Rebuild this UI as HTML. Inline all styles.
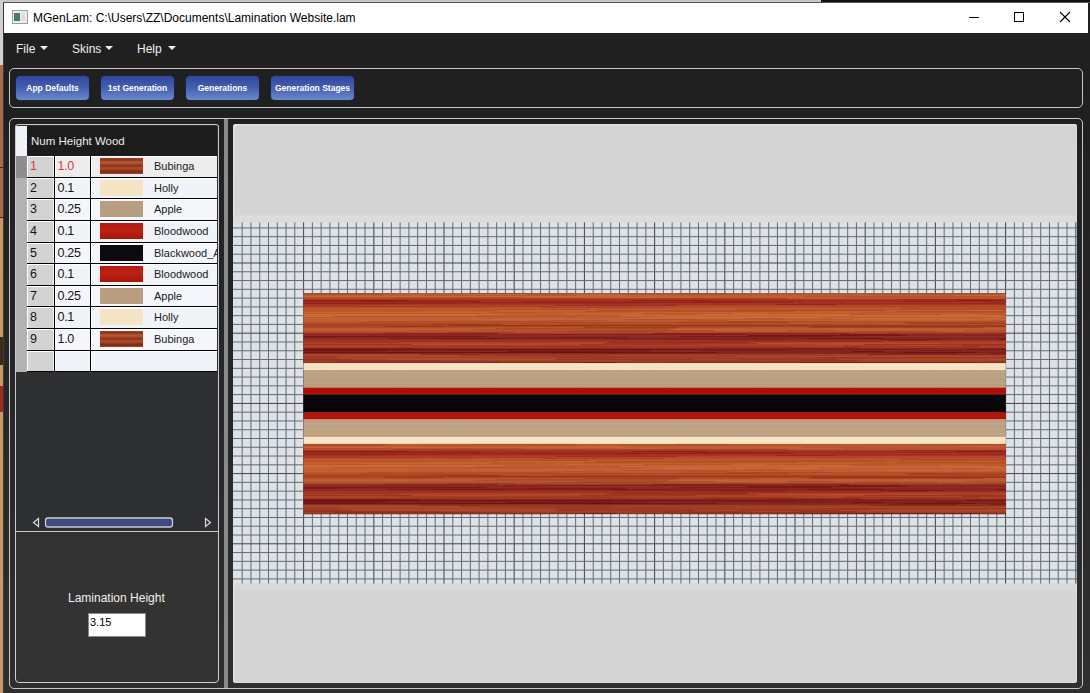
<!DOCTYPE html>
<html><head><meta charset="utf-8">
<style>
html,body{margin:0;padding:0;}
body{width:1090px;height:693px;overflow:hidden;position:relative;background:#222;font-family:"Liberation Sans",sans-serif;}
.a{position:absolute;}
.tx{font-size:12.5px;line-height:15px;white-space:nowrap;letter-spacing:-0.3px}
.tw{font-size:11px;line-height:13px;white-space:nowrap;color:#1a1a1a;overflow:hidden;width:63px}
.btn{position:absolute;top:76px;height:24px;border-radius:4px;background:linear-gradient(180deg,#32449c 0%,#4560b0 50%,#6b8acc 100%);box-shadow:0 0 0 1px #1a2440;color:#fff;font-weight:bold;font-size:8.5px;line-height:24px;text-align:center;white-space:nowrap}
.menu{position:absolute;top:42px;color:#f0f0f0;font-size:12px;line-height:15px}
.tri{position:absolute;width:0;height:0;border-left:4px solid transparent;border-right:4px solid transparent;border-top:4px solid #f0f0f0}
</style></head><body>
<!-- background bits -->
<div class="a" style="left:0;top:0;width:821px;height:2px;background:#c8c8c8"></div>
<div class="a" style="left:821px;top:0;width:269px;height:2px;background:#121212"></div>
<div class="a" style="left:0;top:0;width:3px;height:65px;background:#d0d0d0"></div>
<div class="a" style="left:0;top:65px;width:3px;height:103px;background:#a86a48"></div>
<div class="a" style="left:0;top:167px;width:3px;height:1px;background:#3a2418"></div>
<div class="a" style="left:0;top:168px;width:3px;height:50px;background:#a86a48"></div>
<div class="a" style="left:0;top:217px;width:3px;height:1px;background:#3a2418"></div>
<div class="a" style="left:0;top:218px;width:3px;height:475px;background:#c89a62"></div>
<div class="a" style="left:0;top:337px;width:3px;height:28px;background:#3a2a1a"></div>
<div class="a" style="left:0;top:386px;width:3px;height:26px;background:#a02a22"></div>
<!-- window -->
<div class="a" style="left:3px;top:2px;width:1087px;height:691px;background:linear-gradient(180deg,#202020 0px,#202020 110px,#2f2f2f 691px);border-left:1px solid #3a3a3a;border-top:1px solid #555;box-sizing:border-box"></div>
<div class="a" style="left:4px;top:3px;width:1084px;height:30px;background:#fff"></div>
<!-- icon -->
<div class="a" style="left:12px;top:10px;width:14px;height:12px;border:1px solid #9aa0a0;background:#e8ecec"></div>
<div class="a" style="left:14px;top:13px;width:6px;height:8px;background:#4a7a68"></div>
<div class="a" style="left:21px;top:13px;width:4px;height:8px;background:#ddd"></div>
<div class="a" style="left:33px;top:11px;font-size:12px;line-height:15px;color:#000;white-space:nowrap">MGenLam: C:\Users\ZZ\Documents\Lamination Website.lam</div>
<!-- title buttons -->
<div class="a" style="left:969px;top:17px;width:10px;height:1px;background:#000"></div>
<div class="a" style="left:1014px;top:12px;width:10px;height:10px;border:1px solid #000;box-sizing:border-box"></div>
<svg class="a" style="left:1059px;top:11px" width="12" height="12" viewBox="0 0 12 12"><path d="M1 1L11 11M11 1L1 11" stroke="#000" stroke-width="1.1"/></svg>
<!-- menu -->
<div class="menu" style="left:16px">File</div><div class="tri" style="left:40px;top:46px"></div>
<div class="menu" style="left:72px">Skins</div><div class="tri" style="left:105px;top:46px"></div>
<div class="menu" style="left:137px">Help</div><div class="tri" style="left:168px;top:46px"></div>
<!-- toolbar group -->
<div class="a" style="left:9px;top:68px;width:1074px;height:40px;border:1.5px solid #c8c8c8;border-radius:5px;box-sizing:border-box"></div>
<div class="btn" style="left:16px;width:73px">App Defaults</div>
<div class="btn" style="left:101px;width:73px">1st Generation</div>
<div class="btn" style="left:186px;width:73px">Generations</div>
<div class="btn" style="left:271px;width:83px">Generation Stages</div>
<!-- main group -->
<div class="a" style="left:9px;top:118px;width:1074px;height:571px;border:1.5px solid #c8c8c8;border-radius:5px;box-sizing:border-box;"></div>
<!-- left panel -->
<div class="a" style="left:15px;top:124px;width:204px;height:559px;border:1.5px solid #d0d0d0;border-radius:4px;box-sizing:border-box;background:#333"></div>
<div class="a" style="left:15px;top:124px;width:204px;height:408px;border:1.5px solid #c4ccd8;border-radius:3px 3px 0 0;box-sizing:border-box;background:#2e2f30"></div>
<div class="a" style="left:16px;top:125.5px;width:11px;height:30px;background:#f0f2f6"></div>
<div class="a" style="left:27px;top:125.5px;width:190px;height:30px;background:#1c1c1c"></div>
<div class="a" style="left:31px;top:134px;font-size:11.5px;line-height:14px;color:#e8ecf0;white-space:nowrap">Num Height Wood</div>
<div class="a" style="left:16px;top:156px;width:11px;height:22px;background:#8e8e8e"></div>
<div class="a" style="left:27px;top:156px;width:190px;height:22px;background:#000"></div>
<div class="a" style="left:27px;top:156px;width:27px;height:21px;background:#d3d3d3;border-top:1px solid #fff;border-left:1px solid #fff;border-right:1px solid #eee;box-sizing:border-box"></div>
<div class="a" style="left:55px;top:156px;width:35px;height:21px;background:#ededed;border-top:1px solid #fff;border-left:1px solid #fff;box-sizing:border-box"></div>
<div class="a" style="left:91px;top:156px;width:126px;height:21px;background:#ededed;border-top:1px solid #fff;border-left:1px solid #fff;box-sizing:border-box"></div>
<div class="a tx" style="left:30px;top:159px;color:#d43a3a">1</div>
<div class="a tx" style="left:57.5px;top:159px;color:#d43a3a">1.0</div>
<div class="a" style="left:100px;top:158px;width:43px;height:16px;background:linear-gradient(180deg,#a04426 0px,#8c3020 2px,#b85c30 4px,#a84a28 6px,#8a2e1e 8px,#b05228 10px,#9a3a22 12px,#7a2818 14px,#a84a28 16px)"></div>
<div class="a tw" style="left:154px;top:160px">Bubinga</div>
<div class="a" style="left:16px;top:178px;width:11px;height:21px;background:#b2b2b2"></div>
<div class="a" style="left:27px;top:178px;width:190px;height:21px;background:#000"></div>
<div class="a" style="left:27px;top:178px;width:27px;height:20px;background:#d3d3d3;border-top:1px solid #fff;border-left:1px solid #fff;border-right:1px solid #eee;box-sizing:border-box"></div>
<div class="a" style="left:55px;top:178px;width:35px;height:20px;background:#f0f3f8;border-top:1px solid #fff;border-left:1px solid #fff;box-sizing:border-box"></div>
<div class="a" style="left:91px;top:178px;width:126px;height:20px;background:#f0f3f8;border-top:1px solid #fff;border-left:1px solid #fff;box-sizing:border-box"></div>
<div class="a tx" style="left:30px;top:181px;color:#141414">2</div>
<div class="a tx" style="left:57.5px;top:181px;color:#141414">0.1</div>
<div class="a" style="left:100px;top:180px;width:43px;height:16px;background:#f5e4c6"></div>
<div class="a tw" style="left:154px;top:182px">Holly</div>
<div class="a" style="left:16px;top:199px;width:11px;height:22px;background:#b2b2b2"></div>
<div class="a" style="left:27px;top:199px;width:190px;height:22px;background:#000"></div>
<div class="a" style="left:27px;top:199px;width:27px;height:21px;background:#d3d3d3;border-top:1px solid #fff;border-left:1px solid #fff;border-right:1px solid #eee;box-sizing:border-box"></div>
<div class="a" style="left:55px;top:199px;width:35px;height:21px;background:#f4f6fb;border-top:1px solid #fff;border-left:1px solid #fff;box-sizing:border-box"></div>
<div class="a" style="left:91px;top:199px;width:126px;height:21px;background:#f4f6fb;border-top:1px solid #fff;border-left:1px solid #fff;box-sizing:border-box"></div>
<div class="a tx" style="left:30px;top:202px;color:#141414">3</div>
<div class="a tx" style="left:57.5px;top:202px;color:#141414">0.25</div>
<div class="a" style="left:100px;top:201px;width:43px;height:16px;background:#b99d81"></div>
<div class="a tw" style="left:154px;top:203px">Apple</div>
<div class="a" style="left:16px;top:221px;width:11px;height:22px;background:#b2b2b2"></div>
<div class="a" style="left:27px;top:221px;width:190px;height:22px;background:#000"></div>
<div class="a" style="left:27px;top:221px;width:27px;height:21px;background:#d3d3d3;border-top:1px solid #fff;border-left:1px solid #fff;border-right:1px solid #eee;box-sizing:border-box"></div>
<div class="a" style="left:55px;top:221px;width:35px;height:21px;background:#f0f3f8;border-top:1px solid #fff;border-left:1px solid #fff;box-sizing:border-box"></div>
<div class="a" style="left:91px;top:221px;width:126px;height:21px;background:#f0f3f8;border-top:1px solid #fff;border-left:1px solid #fff;box-sizing:border-box"></div>
<div class="a tx" style="left:30px;top:224px;color:#141414">4</div>
<div class="a tx" style="left:57.5px;top:224px;color:#141414">0.1</div>
<div class="a" style="left:100px;top:223px;width:43px;height:16px;background:linear-gradient(180deg,#b41a10,#bc2214 50%,#a81408)"></div>
<div class="a tw" style="left:154px;top:225px">Bloodwood</div>
<div class="a" style="left:16px;top:243px;width:11px;height:21px;background:#b2b2b2"></div>
<div class="a" style="left:27px;top:243px;width:190px;height:21px;background:#000"></div>
<div class="a" style="left:27px;top:243px;width:27px;height:20px;background:#d3d3d3;border-top:1px solid #fff;border-left:1px solid #fff;border-right:1px solid #eee;box-sizing:border-box"></div>
<div class="a" style="left:55px;top:243px;width:35px;height:20px;background:#f4f6fb;border-top:1px solid #fff;border-left:1px solid #fff;box-sizing:border-box"></div>
<div class="a" style="left:91px;top:243px;width:126px;height:20px;background:#f4f6fb;border-top:1px solid #fff;border-left:1px solid #fff;box-sizing:border-box"></div>
<div class="a tx" style="left:30px;top:246px;color:#141414">5</div>
<div class="a tx" style="left:57.5px;top:246px;color:#141414">0.25</div>
<div class="a" style="left:100px;top:245px;width:43px;height:16px;background:#0c0a0c"></div>
<div class="a tw" style="left:154px;top:247px">Blackwood_A</div>
<div class="a" style="left:16px;top:264px;width:11px;height:22px;background:#b2b2b2"></div>
<div class="a" style="left:27px;top:264px;width:190px;height:22px;background:#000"></div>
<div class="a" style="left:27px;top:264px;width:27px;height:21px;background:#d3d3d3;border-top:1px solid #fff;border-left:1px solid #fff;border-right:1px solid #eee;box-sizing:border-box"></div>
<div class="a" style="left:55px;top:264px;width:35px;height:21px;background:#f0f3f8;border-top:1px solid #fff;border-left:1px solid #fff;box-sizing:border-box"></div>
<div class="a" style="left:91px;top:264px;width:126px;height:21px;background:#f0f3f8;border-top:1px solid #fff;border-left:1px solid #fff;box-sizing:border-box"></div>
<div class="a tx" style="left:30px;top:267px;color:#141414">6</div>
<div class="a tx" style="left:57.5px;top:267px;color:#141414">0.1</div>
<div class="a" style="left:100px;top:266px;width:43px;height:16px;background:linear-gradient(180deg,#b41a10,#bc2214 50%,#a81408)"></div>
<div class="a tw" style="left:154px;top:268px">Bloodwood</div>
<div class="a" style="left:16px;top:286px;width:11px;height:21px;background:#b2b2b2"></div>
<div class="a" style="left:27px;top:286px;width:190px;height:21px;background:#000"></div>
<div class="a" style="left:27px;top:286px;width:27px;height:20px;background:#d3d3d3;border-top:1px solid #fff;border-left:1px solid #fff;border-right:1px solid #eee;box-sizing:border-box"></div>
<div class="a" style="left:55px;top:286px;width:35px;height:20px;background:#f4f6fb;border-top:1px solid #fff;border-left:1px solid #fff;box-sizing:border-box"></div>
<div class="a" style="left:91px;top:286px;width:126px;height:20px;background:#f4f6fb;border-top:1px solid #fff;border-left:1px solid #fff;box-sizing:border-box"></div>
<div class="a tx" style="left:30px;top:289px;color:#141414">7</div>
<div class="a tx" style="left:57.5px;top:289px;color:#141414">0.25</div>
<div class="a" style="left:100px;top:288px;width:43px;height:16px;background:#b99d81"></div>
<div class="a tw" style="left:154px;top:290px">Apple</div>
<div class="a" style="left:16px;top:307px;width:11px;height:22px;background:#b2b2b2"></div>
<div class="a" style="left:27px;top:307px;width:190px;height:22px;background:#000"></div>
<div class="a" style="left:27px;top:307px;width:27px;height:21px;background:#d3d3d3;border-top:1px solid #fff;border-left:1px solid #fff;border-right:1px solid #eee;box-sizing:border-box"></div>
<div class="a" style="left:55px;top:307px;width:35px;height:21px;background:#f0f3f8;border-top:1px solid #fff;border-left:1px solid #fff;box-sizing:border-box"></div>
<div class="a" style="left:91px;top:307px;width:126px;height:21px;background:#f0f3f8;border-top:1px solid #fff;border-left:1px solid #fff;box-sizing:border-box"></div>
<div class="a tx" style="left:30px;top:310px;color:#141414">8</div>
<div class="a tx" style="left:57.5px;top:310px;color:#141414">0.1</div>
<div class="a" style="left:100px;top:309px;width:43px;height:16px;background:#f5e4c6"></div>
<div class="a tw" style="left:154px;top:311px">Holly</div>
<div class="a" style="left:16px;top:329px;width:11px;height:22px;background:#b2b2b2"></div>
<div class="a" style="left:27px;top:329px;width:190px;height:22px;background:#000"></div>
<div class="a" style="left:27px;top:329px;width:27px;height:21px;background:#d3d3d3;border-top:1px solid #fff;border-left:1px solid #fff;border-right:1px solid #eee;box-sizing:border-box"></div>
<div class="a" style="left:55px;top:329px;width:35px;height:21px;background:#f4f6fb;border-top:1px solid #fff;border-left:1px solid #fff;box-sizing:border-box"></div>
<div class="a" style="left:91px;top:329px;width:126px;height:21px;background:#f4f6fb;border-top:1px solid #fff;border-left:1px solid #fff;box-sizing:border-box"></div>
<div class="a tx" style="left:30px;top:332px;color:#141414">9</div>
<div class="a tx" style="left:57.5px;top:332px;color:#141414">1.0</div>
<div class="a" style="left:100px;top:331px;width:43px;height:16px;background:linear-gradient(180deg,#a04426 0px,#8c3020 2px,#b85c30 4px,#a84a28 6px,#8a2e1e 8px,#b05228 10px,#9a3a22 12px,#7a2818 14px,#a84a28 16px)"></div>
<div class="a tw" style="left:154px;top:333px">Bubinga</div>
<div class="a" style="left:16px;top:351px;width:11px;height:21px;background:#b2b2b2"></div>
<div class="a" style="left:27px;top:351px;width:190px;height:21px;background:#000"></div>
<div class="a" style="left:27px;top:351px;width:27px;height:20px;background:#d3d3d3;border-top:1px solid #fff;border-left:1px solid #fff;border-right:1px solid #eee;box-sizing:border-box"></div>
<div class="a" style="left:55px;top:351px;width:35px;height:20px;background:#f0f3f8;border-top:1px solid #fff;border-left:1px solid #fff;box-sizing:border-box"></div>
<div class="a" style="left:91px;top:351px;width:126px;height:20px;background:#f0f3f8;border-top:1px solid #fff;border-left:1px solid #fff;box-sizing:border-box"></div>
<!-- scrollbar -->
<svg class="a" style="left:30px;top:515px" width="184" height="14" viewBox="0 0 184 14">
<path d="M8.5 3.5L3.5 7.5L8.5 11.5Z" fill="none" stroke="#d8d8e0" stroke-width="1.2"/>
<path d="M175.5 3.5L180.5 7.5L175.5 11.5Z" fill="none" stroke="#d8d8e0" stroke-width="1.2"/>
<rect x="15.5" y="3" width="127" height="9" rx="2.5" fill="#3f4a7a" stroke="#c8cce0" stroke-width="1.3"/>
</svg>
<div class="a" style="left:68px;top:591px;font-size:12px;line-height:14px;color:#f0f0f0;white-space:nowrap">Lamination Height</div>
<div class="a" style="left:88px;top:613px;width:58px;height:24px;background:#fff;border:1px solid #888;box-sizing:border-box"></div>
<div class="a" style="left:90px;top:615px;font-size:11px;line-height:14px;color:#000;white-space:nowrap">3.15</div>
<!-- splitter -->
<div class="a" style="left:224px;top:119px;width:4px;height:569px;background:#8a8a8a"></div>
<!-- right panel -->
<div class="a" style="left:233px;top:124px;width:844px;height:559px;background:#d4d4d4;border-radius:3px;box-shadow:inset 1.5px 1.5px 0 #e2e2e2, inset -1px -1px 0 #dcdcdc"></div>
<svg class="a" style="left:0;top:0" width="1090" height="693" viewBox="0 0 1090 693">
<rect x="235.0" y="215.4" width="841.0" height="7" fill="#dcdcdc"/>
<rect x="235.0" y="583.6" width="841.0" height="7" fill="#d9d9d9"/>
<rect x="233.0" y="222.4" width="844.0" height="361.20000000000005" fill="#dee1e5"/>
<rect x="241.68" y="222.4" width="1" height="361.2" fill="#606c77"/>
<rect x="250.45" y="222.4" width="1" height="361.2" fill="#606c77"/>
<rect x="259.23" y="222.4" width="1" height="361.2" fill="#606c77"/>
<rect x="268.00" y="222.4" width="1" height="361.2" fill="#606c77"/>
<rect x="276.78" y="222.4" width="1" height="361.2" fill="#606c77"/>
<rect x="285.55" y="222.4" width="1" height="361.2" fill="#606c77"/>
<rect x="294.32" y="222.4" width="1" height="361.2" fill="#606c77"/>
<rect x="303.10" y="222.4" width="1" height="361.2" fill="#3c4650"/>
<rect x="311.88" y="222.4" width="1" height="361.2" fill="#606c77"/>
<rect x="320.65" y="222.4" width="1" height="361.2" fill="#606c77"/>
<rect x="329.43" y="222.4" width="1" height="361.2" fill="#606c77"/>
<rect x="338.20" y="222.4" width="1" height="361.2" fill="#606c77"/>
<rect x="346.98" y="222.4" width="1" height="361.2" fill="#606c77"/>
<rect x="355.75" y="222.4" width="1" height="361.2" fill="#606c77"/>
<rect x="364.53" y="222.4" width="1" height="361.2" fill="#606c77"/>
<rect x="373.30" y="222.4" width="1" height="361.2" fill="#3c4650"/>
<rect x="382.07" y="222.4" width="1" height="361.2" fill="#606c77"/>
<rect x="390.85" y="222.4" width="1" height="361.2" fill="#606c77"/>
<rect x="399.62" y="222.4" width="1" height="361.2" fill="#606c77"/>
<rect x="408.40" y="222.4" width="1" height="361.2" fill="#606c77"/>
<rect x="417.18" y="222.4" width="1" height="361.2" fill="#606c77"/>
<rect x="425.95" y="222.4" width="1" height="361.2" fill="#606c77"/>
<rect x="434.73" y="222.4" width="1" height="361.2" fill="#606c77"/>
<rect x="443.50" y="222.4" width="1" height="361.2" fill="#3c4650"/>
<rect x="452.27" y="222.4" width="1" height="361.2" fill="#606c77"/>
<rect x="461.05" y="222.4" width="1" height="361.2" fill="#606c77"/>
<rect x="469.83" y="222.4" width="1" height="361.2" fill="#606c77"/>
<rect x="478.60" y="222.4" width="1" height="361.2" fill="#606c77"/>
<rect x="487.38" y="222.4" width="1" height="361.2" fill="#606c77"/>
<rect x="496.15" y="222.4" width="1" height="361.2" fill="#606c77"/>
<rect x="504.93" y="222.4" width="1" height="361.2" fill="#606c77"/>
<rect x="513.70" y="222.4" width="1" height="361.2" fill="#3c4650"/>
<rect x="522.48" y="222.4" width="1" height="361.2" fill="#606c77"/>
<rect x="531.25" y="222.4" width="1" height="361.2" fill="#606c77"/>
<rect x="540.02" y="222.4" width="1" height="361.2" fill="#606c77"/>
<rect x="548.80" y="222.4" width="1" height="361.2" fill="#606c77"/>
<rect x="557.58" y="222.4" width="1" height="361.2" fill="#606c77"/>
<rect x="566.35" y="222.4" width="1" height="361.2" fill="#606c77"/>
<rect x="575.12" y="222.4" width="1" height="361.2" fill="#606c77"/>
<rect x="583.90" y="222.4" width="1" height="361.2" fill="#3c4650"/>
<rect x="592.68" y="222.4" width="1" height="361.2" fill="#606c77"/>
<rect x="601.45" y="222.4" width="1" height="361.2" fill="#606c77"/>
<rect x="610.23" y="222.4" width="1" height="361.2" fill="#606c77"/>
<rect x="619.00" y="222.4" width="1" height="361.2" fill="#606c77"/>
<rect x="627.77" y="222.4" width="1" height="361.2" fill="#606c77"/>
<rect x="636.55" y="222.4" width="1" height="361.2" fill="#606c77"/>
<rect x="645.33" y="222.4" width="1" height="361.2" fill="#606c77"/>
<rect x="654.10" y="222.4" width="1" height="361.2" fill="#3c4650"/>
<rect x="662.88" y="222.4" width="1" height="361.2" fill="#606c77"/>
<rect x="671.65" y="222.4" width="1" height="361.2" fill="#606c77"/>
<rect x="680.43" y="222.4" width="1" height="361.2" fill="#606c77"/>
<rect x="689.20" y="222.4" width="1" height="361.2" fill="#606c77"/>
<rect x="697.98" y="222.4" width="1" height="361.2" fill="#606c77"/>
<rect x="706.75" y="222.4" width="1" height="361.2" fill="#606c77"/>
<rect x="715.52" y="222.4" width="1" height="361.2" fill="#606c77"/>
<rect x="724.30" y="222.4" width="1" height="361.2" fill="#3c4650"/>
<rect x="733.08" y="222.4" width="1" height="361.2" fill="#606c77"/>
<rect x="741.85" y="222.4" width="1" height="361.2" fill="#606c77"/>
<rect x="750.62" y="222.4" width="1" height="361.2" fill="#606c77"/>
<rect x="759.40" y="222.4" width="1" height="361.2" fill="#606c77"/>
<rect x="768.18" y="222.4" width="1" height="361.2" fill="#606c77"/>
<rect x="776.95" y="222.4" width="1" height="361.2" fill="#606c77"/>
<rect x="785.73" y="222.4" width="1" height="361.2" fill="#606c77"/>
<rect x="794.50" y="222.4" width="1" height="361.2" fill="#3c4650"/>
<rect x="803.28" y="222.4" width="1" height="361.2" fill="#606c77"/>
<rect x="812.05" y="222.4" width="1" height="361.2" fill="#606c77"/>
<rect x="820.83" y="222.4" width="1" height="361.2" fill="#606c77"/>
<rect x="829.60" y="222.4" width="1" height="361.2" fill="#606c77"/>
<rect x="838.38" y="222.4" width="1" height="361.2" fill="#606c77"/>
<rect x="847.15" y="222.4" width="1" height="361.2" fill="#606c77"/>
<rect x="855.93" y="222.4" width="1" height="361.2" fill="#606c77"/>
<rect x="864.70" y="222.4" width="1" height="361.2" fill="#3c4650"/>
<rect x="873.48" y="222.4" width="1" height="361.2" fill="#606c77"/>
<rect x="882.25" y="222.4" width="1" height="361.2" fill="#606c77"/>
<rect x="891.03" y="222.4" width="1" height="361.2" fill="#606c77"/>
<rect x="899.80" y="222.4" width="1" height="361.2" fill="#606c77"/>
<rect x="908.58" y="222.4" width="1" height="361.2" fill="#606c77"/>
<rect x="917.35" y="222.4" width="1" height="361.2" fill="#606c77"/>
<rect x="926.12" y="222.4" width="1" height="361.2" fill="#606c77"/>
<rect x="934.90" y="222.4" width="1" height="361.2" fill="#3c4650"/>
<rect x="943.67" y="222.4" width="1" height="361.2" fill="#606c77"/>
<rect x="952.45" y="222.4" width="1" height="361.2" fill="#606c77"/>
<rect x="961.23" y="222.4" width="1" height="361.2" fill="#606c77"/>
<rect x="970.00" y="222.4" width="1" height="361.2" fill="#606c77"/>
<rect x="978.78" y="222.4" width="1" height="361.2" fill="#606c77"/>
<rect x="987.55" y="222.4" width="1" height="361.2" fill="#606c77"/>
<rect x="996.33" y="222.4" width="1" height="361.2" fill="#606c77"/>
<rect x="1005.10" y="222.4" width="1" height="361.2" fill="#3c4650"/>
<rect x="1013.88" y="222.4" width="1" height="361.2" fill="#606c77"/>
<rect x="1022.65" y="222.4" width="1" height="361.2" fill="#606c77"/>
<rect x="1031.42" y="222.4" width="1" height="361.2" fill="#606c77"/>
<rect x="1040.20" y="222.4" width="1" height="361.2" fill="#606c77"/>
<rect x="1048.97" y="222.4" width="1" height="361.2" fill="#606c77"/>
<rect x="1057.75" y="222.4" width="1" height="361.2" fill="#606c77"/>
<rect x="1066.53" y="222.4" width="1" height="361.2" fill="#606c77"/>
<rect x="1075.30" y="222.4" width="1" height="361.2" fill="#3c4650"/>
<rect x="233.0" y="227.40" width="844.0" height="1" fill="#606c77"/>
<rect x="233.0" y="236.17" width="844.0" height="1" fill="#606c77"/>
<rect x="233.0" y="244.95" width="844.0" height="1" fill="#606c77"/>
<rect x="233.0" y="253.72" width="844.0" height="1" fill="#606c77"/>
<rect x="233.0" y="262.50" width="844.0" height="1" fill="#3c4650"/>
<rect x="233.0" y="271.27" width="844.0" height="1" fill="#606c77"/>
<rect x="233.0" y="280.05" width="844.0" height="1" fill="#606c77"/>
<rect x="233.0" y="288.82" width="844.0" height="1" fill="#606c77"/>
<rect x="233.0" y="297.60" width="844.0" height="1" fill="#606c77"/>
<rect x="233.0" y="306.38" width="844.0" height="1" fill="#606c77"/>
<rect x="233.0" y="315.15" width="844.0" height="1" fill="#606c77"/>
<rect x="233.0" y="323.92" width="844.0" height="1" fill="#606c77"/>
<rect x="233.0" y="332.70" width="844.0" height="1" fill="#3c4650"/>
<rect x="233.0" y="341.47" width="844.0" height="1" fill="#606c77"/>
<rect x="233.0" y="350.25" width="844.0" height="1" fill="#606c77"/>
<rect x="233.0" y="359.02" width="844.0" height="1" fill="#606c77"/>
<rect x="233.0" y="367.80" width="844.0" height="1" fill="#606c77"/>
<rect x="233.0" y="376.57" width="844.0" height="1" fill="#606c77"/>
<rect x="233.0" y="385.35" width="844.0" height="1" fill="#606c77"/>
<rect x="233.0" y="394.12" width="844.0" height="1" fill="#606c77"/>
<rect x="233.0" y="402.90" width="844.0" height="1" fill="#3c4650"/>
<rect x="233.0" y="411.67" width="844.0" height="1" fill="#606c77"/>
<rect x="233.0" y="420.45" width="844.0" height="1" fill="#606c77"/>
<rect x="233.0" y="429.22" width="844.0" height="1" fill="#606c77"/>
<rect x="233.0" y="438.00" width="844.0" height="1" fill="#606c77"/>
<rect x="233.0" y="446.77" width="844.0" height="1" fill="#606c77"/>
<rect x="233.0" y="455.55" width="844.0" height="1" fill="#606c77"/>
<rect x="233.0" y="464.32" width="844.0" height="1" fill="#606c77"/>
<rect x="233.0" y="473.10" width="844.0" height="1" fill="#3c4650"/>
<rect x="233.0" y="481.88" width="844.0" height="1" fill="#606c77"/>
<rect x="233.0" y="490.65" width="844.0" height="1" fill="#606c77"/>
<rect x="233.0" y="499.42" width="844.0" height="1" fill="#606c77"/>
<rect x="233.0" y="508.20" width="844.0" height="1" fill="#606c77"/>
<rect x="233.0" y="516.98" width="844.0" height="1" fill="#606c77"/>
<rect x="233.0" y="525.75" width="844.0" height="1" fill="#606c77"/>
<rect x="233.0" y="534.52" width="844.0" height="1" fill="#606c77"/>
<rect x="233.0" y="543.30" width="844.0" height="1" fill="#3c4650"/>
<rect x="233.0" y="552.08" width="844.0" height="1" fill="#606c77"/>
<rect x="233.0" y="560.85" width="844.0" height="1" fill="#606c77"/>
<rect x="233.0" y="569.62" width="844.0" height="1" fill="#606c77"/>
<rect x="233.0" y="578.40" width="844.0" height="1" fill="#606c77"/>
<defs><g id="bub"><rect x="303.6" y="0.00" width="702.1" height="1.05" fill="#b9552e"/><rect x="303.6" y="0.00" width="85.1" height="1.05" fill="#aa4827" opacity="0.6"/><rect x="388.7" y="0.00" width="42.3" height="1.05" fill="#c15e35" opacity="0.6"/><rect x="431.0" y="0.00" width="39.9" height="1.05" fill="#bd5a31" opacity="0.6"/><rect x="470.8" y="0.00" width="103.7" height="1.05" fill="#9f3e22" opacity="0.6"/><rect x="676.7" y="0.00" width="51.0" height="1.05" fill="#aa4827" opacity="0.6"/><rect x="727.8" y="0.00" width="191.1" height="1.05" fill="#c15e35" opacity="0.6"/><rect x="918.9" y="0.00" width="86.8" height="1.05" fill="#ae4c29" opacity="0.6"/><rect x="303.6" y="1.00" width="702.1" height="1.05" fill="#bc5931"/><rect x="303.6" y="1.00" width="79.2" height="1.05" fill="#a34326" opacity="0.6"/><rect x="465.3" y="1.00" width="60.7" height="1.05" fill="#c7653a" opacity="0.6"/><rect x="526.0" y="1.00" width="93.3" height="1.05" fill="#c05e35" opacity="0.6"/><rect x="619.3" y="1.00" width="40.1" height="1.05" fill="#ae4c2a" opacity="0.6"/><rect x="659.4" y="1.00" width="102.7" height="1.05" fill="#ac4b2a" opacity="0.6"/><rect x="762.1" y="1.00" width="107.0" height="1.05" fill="#b04e2b" opacity="0.6"/><rect x="869.2" y="1.00" width="136.5" height="1.05" fill="#ac4b2a" opacity="0.6"/><rect x="303.6" y="2.00" width="702.1" height="1.05" fill="#bf5e34"/><rect x="422.9" y="2.00" width="154.0" height="1.05" fill="#b75730" opacity="0.6"/><rect x="576.9" y="2.00" width="50.1" height="1.05" fill="#cb6c3e" opacity="0.6"/><rect x="627.0" y="2.00" width="55.8" height="1.05" fill="#c36337" opacity="0.6"/><rect x="953.8" y="2.00" width="51.9" height="1.05" fill="#c96a3d" opacity="0.6"/><rect x="303.6" y="3.00" width="702.1" height="1.05" fill="#c05f35"/><rect x="303.6" y="3.00" width="128.6" height="1.05" fill="#cd6e40" opacity="0.6"/><rect x="432.2" y="3.00" width="190.6" height="1.05" fill="#cb6c3e" opacity="0.6"/><rect x="803.1" y="3.00" width="169.7" height="1.05" fill="#ac4d2c" opacity="0.6"/><rect x="972.8" y="3.00" width="32.9" height="1.05" fill="#ae4f2d" opacity="0.6"/><rect x="303.6" y="4.00" width="702.1" height="1.05" fill="#bf5e34"/><rect x="303.6" y="4.00" width="58.6" height="1.05" fill="#a54728" opacity="0.6"/><rect x="362.2" y="4.00" width="160.6" height="1.05" fill="#a84a2a" opacity="0.6"/><rect x="619.2" y="4.00" width="43.7" height="1.05" fill="#c9693c" opacity="0.6"/><rect x="843.1" y="4.00" width="162.6" height="1.05" fill="#ac4d2b" opacity="0.6"/><rect x="303.6" y="5.00" width="702.1" height="1.05" fill="#b6512e"/><rect x="394.6" y="5.00" width="192.8" height="1.05" fill="#9e3c23" opacity="0.6"/><rect x="587.4" y="5.00" width="69.4" height="1.05" fill="#a44126" opacity="0.6"/><rect x="656.8" y="5.00" width="130.2" height="1.05" fill="#9b3922" opacity="0.6"/><rect x="787.0" y="5.00" width="101.2" height="1.05" fill="#c05d37" opacity="0.6"/><rect x="888.2" y="5.00" width="117.5" height="1.05" fill="#bf5c36" opacity="0.6"/><rect x="303.6" y="6.00" width="702.1" height="1.05" fill="#a53725"/><rect x="303.6" y="6.00" width="135.0" height="1.05" fill="#a93c29" opacity="0.6"/><rect x="800.2" y="6.00" width="96.7" height="1.05" fill="#aa3d29" opacity="0.6"/><rect x="896.9" y="6.00" width="108.8" height="1.05" fill="#8b2019" opacity="0.6"/><rect x="303.6" y="7.00" width="702.1" height="1.05" fill="#9c2a20"/><rect x="303.6" y="7.00" width="65.5" height="1.05" fill="#871716" opacity="0.6"/><rect x="369.1" y="7.00" width="38.9" height="1.05" fill="#831415" opacity="0.6"/><rect x="408.0" y="7.00" width="47.2" height="1.05" fill="#a02f23" opacity="0.6"/><rect x="455.3" y="7.00" width="178.6" height="1.05" fill="#a13025" opacity="0.6"/><rect x="633.9" y="7.00" width="72.9" height="1.05" fill="#881817" opacity="0.6"/><rect x="757.7" y="7.00" width="198.8" height="1.05" fill="#a53428" opacity="0.6"/><rect x="956.5" y="7.00" width="44.6" height="1.05" fill="#871817" opacity="0.6"/><rect x="303.6" y="8.00" width="702.1" height="1.05" fill="#9d2b20"/><rect x="303.6" y="8.00" width="57.4" height="1.05" fill="#94231c" opacity="0.6"/><rect x="361.0" y="8.00" width="119.8" height="1.05" fill="#8c1c18" opacity="0.6"/><rect x="480.8" y="8.00" width="34.6" height="1.05" fill="#ac3c2c" opacity="0.6"/><rect x="515.4" y="8.00" width="176.8" height="1.05" fill="#a43326" opacity="0.6"/><rect x="692.2" y="8.00" width="92.3" height="1.05" fill="#91201a" opacity="0.6"/><rect x="905.1" y="8.00" width="86.0" height="1.05" fill="#92211b" opacity="0.6"/><rect x="303.6" y="9.00" width="702.1" height="1.05" fill="#9e2c20"/><rect x="470.6" y="9.00" width="155.8" height="1.05" fill="#8d1d18" opacity="0.6"/><rect x="626.4" y="9.00" width="90.4" height="1.05" fill="#831414" opacity="0.6"/><rect x="716.9" y="9.00" width="77.5" height="1.05" fill="#90201a" opacity="0.6"/><rect x="794.4" y="9.00" width="192.6" height="1.05" fill="#ac3c2c" opacity="0.6"/><rect x="303.6" y="10.00" width="702.1" height="1.05" fill="#9f2d20"/><rect x="303.6" y="10.00" width="92.0" height="1.05" fill="#881815" opacity="0.6"/><rect x="395.6" y="10.00" width="63.4" height="1.05" fill="#901f19" opacity="0.6"/><rect x="642.1" y="10.00" width="111.5" height="1.05" fill="#ac3c2b" opacity="0.6"/><rect x="753.6" y="10.00" width="44.4" height="1.05" fill="#ad3d2c" opacity="0.6"/><rect x="961.0" y="10.00" width="44.7" height="1.05" fill="#93221a" opacity="0.6"/><rect x="303.6" y="11.00" width="702.1" height="1.05" fill="#a43321"/><rect x="390.1" y="11.00" width="195.2" height="1.05" fill="#ac3c28" opacity="0.6"/><rect x="776.3" y="11.00" width="58.9" height="1.05" fill="#8b1d16" opacity="0.6"/><rect x="303.6" y="12.00" width="702.1" height="1.05" fill="#ac3d24"/><rect x="358.4" y="12.00" width="196.7" height="1.05" fill="#b4462a" opacity="0.6"/><rect x="555.1" y="12.00" width="123.3" height="1.05" fill="#912518" opacity="0.6"/><rect x="678.4" y="12.00" width="195.1" height="1.05" fill="#b6482c" opacity="0.6"/><rect x="873.4" y="12.00" width="132.3" height="1.05" fill="#b94c2f" opacity="0.6"/><rect x="303.6" y="13.00" width="702.1" height="1.05" fill="#b24527"/><rect x="303.6" y="13.00" width="170.4" height="1.05" fill="#9b311d" opacity="0.6"/><rect x="474.0" y="13.00" width="79.8" height="1.05" fill="#a23720" opacity="0.6"/><rect x="553.9" y="13.00" width="74.1" height="1.05" fill="#b74b2b" opacity="0.6"/><rect x="627.9" y="13.00" width="184.7" height="1.05" fill="#bb4f2e" opacity="0.6"/><rect x="303.6" y="14.00" width="702.1" height="1.05" fill="#b64a29"/><rect x="303.6" y="14.00" width="115.3" height="1.05" fill="#c05531" opacity="0.6"/><rect x="418.9" y="14.00" width="33.2" height="1.05" fill="#bc512e" opacity="0.6"/><rect x="482.7" y="14.00" width="59.3" height="1.05" fill="#c25833" opacity="0.6"/><rect x="542.0" y="14.00" width="124.6" height="1.05" fill="#a53b21" opacity="0.6"/><rect x="791.1" y="14.00" width="48.0" height="1.05" fill="#bc512e" opacity="0.6"/><rect x="916.2" y="14.00" width="89.5" height="1.05" fill="#c25833" opacity="0.6"/><rect x="303.6" y="15.00" width="702.1" height="1.05" fill="#ba502a"/><rect x="303.6" y="15.00" width="185.1" height="1.05" fill="#c55c33" opacity="0.6"/><rect x="488.7" y="15.00" width="115.9" height="1.05" fill="#c55d34" opacity="0.6"/><rect x="604.7" y="15.00" width="106.9" height="1.05" fill="#c35a32" opacity="0.6"/><rect x="711.6" y="15.00" width="190.1" height="1.05" fill="#c86036" opacity="0.6"/><rect x="901.6" y="15.00" width="104.1" height="1.05" fill="#aa4122" opacity="0.6"/><rect x="303.6" y="16.00" width="702.1" height="1.05" fill="#be562c"/><rect x="494.0" y="16.00" width="53.3" height="1.05" fill="#ab4523" opacity="0.6"/><rect x="547.3" y="16.00" width="42.3" height="1.05" fill="#a43f20" opacity="0.6"/><rect x="733.4" y="16.00" width="182.5" height="1.05" fill="#b14a26" opacity="0.6"/><rect x="915.9" y="16.00" width="89.8" height="1.05" fill="#b44d27" opacity="0.6"/><rect x="303.6" y="17.00" width="702.1" height="1.05" fill="#c15a2e"/><rect x="303.6" y="17.00" width="194.5" height="1.05" fill="#b8522a" opacity="0.6"/><rect x="498.1" y="17.00" width="97.7" height="1.05" fill="#d06b3b" opacity="0.6"/><rect x="595.8" y="17.00" width="171.5" height="1.05" fill="#ae4925" opacity="0.6"/><rect x="767.3" y="17.00" width="117.7" height="1.05" fill="#a94523" opacity="0.6"/><rect x="969.1" y="17.00" width="33.3" height="1.05" fill="#ca6435" opacity="0.6"/><rect x="1002.4" y="17.00" width="3.3" height="1.05" fill="#b24c27" opacity="0.6"/><rect x="303.6" y="18.00" width="702.1" height="1.05" fill="#c25d2f"/><rect x="303.6" y="18.00" width="117.1" height="1.05" fill="#ba562b" opacity="0.6"/><rect x="584.7" y="18.00" width="47.8" height="1.05" fill="#a74523" opacity="0.6"/><rect x="632.5" y="18.00" width="162.4" height="1.05" fill="#a94724" opacity="0.6"/><rect x="896.7" y="18.00" width="109.0" height="1.05" fill="#a94724" opacity="0.6"/><rect x="303.6" y="19.00" width="702.1" height="1.05" fill="#c46031"/><rect x="303.6" y="19.00" width="186.3" height="1.05" fill="#d06d3b" opacity="0.6"/><rect x="489.9" y="19.00" width="45.2" height="1.05" fill="#b6542b" opacity="0.6"/><rect x="535.1" y="19.00" width="102.3" height="1.05" fill="#bb582d" opacity="0.6"/><rect x="860.8" y="19.00" width="107.1" height="1.05" fill="#b35129" opacity="0.6"/><rect x="967.9" y="19.00" width="37.8" height="1.05" fill="#ab4a26" opacity="0.6"/><rect x="303.6" y="20.00" width="702.1" height="1.05" fill="#c66333"/><rect x="303.6" y="20.00" width="119.6" height="1.05" fill="#ad4c27" opacity="0.6"/><rect x="423.2" y="20.00" width="57.4" height="1.05" fill="#ae4e28" opacity="0.6"/><rect x="480.6" y="20.00" width="83.0" height="1.05" fill="#ba582d" opacity="0.6"/><rect x="563.7" y="20.00" width="79.3" height="1.05" fill="#cc6a38" opacity="0.6"/><rect x="643.0" y="20.00" width="89.0" height="1.05" fill="#af4f29" opacity="0.6"/><rect x="764.6" y="20.00" width="123.7" height="1.05" fill="#b4532b" opacity="0.6"/><rect x="888.2" y="20.00" width="117.5" height="1.05" fill="#bb592e" opacity="0.6"/><rect x="303.6" y="21.00" width="702.1" height="1.05" fill="#c76634"/><rect x="303.6" y="21.00" width="103.5" height="1.05" fill="#d4753f" opacity="0.6"/><rect x="407.1" y="21.00" width="96.8" height="1.05" fill="#d2733e" opacity="0.6"/><rect x="503.9" y="21.00" width="197.0" height="1.05" fill="#bc5c2f" opacity="0.6"/><rect x="700.9" y="21.00" width="150.1" height="1.05" fill="#cf6f3b" opacity="0.6"/><rect x="851.1" y="21.00" width="89.1" height="1.05" fill="#ae5029" opacity="0.6"/><rect x="982.2" y="21.00" width="23.5" height="1.05" fill="#ad4f28" opacity="0.6"/><rect x="303.6" y="22.00" width="702.1" height="1.05" fill="#c86735"/><rect x="476.6" y="22.00" width="144.0" height="1.05" fill="#b1532b" opacity="0.6"/><rect x="620.6" y="22.00" width="79.8" height="1.05" fill="#cd6d3a" opacity="0.6"/><rect x="700.4" y="22.00" width="105.8" height="1.05" fill="#c05f31" opacity="0.6"/><rect x="806.2" y="22.00" width="195.3" height="1.05" fill="#ce6e3a" opacity="0.6"/><rect x="1001.6" y="22.00" width="4.1" height="1.05" fill="#b4552c" opacity="0.6"/><rect x="303.6" y="23.00" width="702.1" height="1.05" fill="#c76534"/><rect x="303.6" y="23.00" width="30.2" height="1.05" fill="#d06f3c" opacity="0.6"/><rect x="333.8" y="23.00" width="115.5" height="1.05" fill="#b5552c" opacity="0.6"/><rect x="449.3" y="23.00" width="30.8" height="1.05" fill="#ad4e28" opacity="0.6"/><rect x="480.1" y="23.00" width="97.9" height="1.05" fill="#ac4d28" opacity="0.6"/><rect x="578.0" y="23.00" width="81.7" height="1.05" fill="#b7572d" opacity="0.6"/><rect x="921.5" y="23.00" width="84.2" height="1.05" fill="#ce6d3a" opacity="0.6"/><rect x="303.6" y="24.00" width="702.1" height="1.05" fill="#c66333"/><rect x="303.6" y="24.00" width="197.4" height="1.05" fill="#b9572d" opacity="0.6"/><rect x="501.0" y="24.00" width="139.3" height="1.05" fill="#bb592e" opacity="0.6"/><rect x="640.4" y="24.00" width="181.6" height="1.05" fill="#d2713d" opacity="0.6"/><rect x="822.0" y="24.00" width="168.1" height="1.05" fill="#b5542b" opacity="0.6"/><rect x="303.6" y="25.00" width="702.1" height="1.05" fill="#c56132"/><rect x="599.7" y="25.00" width="146.1" height="1.05" fill="#cb6837" opacity="0.6"/><rect x="745.8" y="25.00" width="35.3" height="1.05" fill="#b14f29" opacity="0.6"/><rect x="828.9" y="25.00" width="124.9" height="1.05" fill="#d06d3b" opacity="0.6"/><rect x="953.9" y="25.00" width="51.8" height="1.05" fill="#c96535" opacity="0.6"/><rect x="303.6" y="26.00" width="702.1" height="1.05" fill="#c25e30"/><rect x="469.2" y="26.00" width="115.5" height="1.05" fill="#cd6b39" opacity="0.6"/><rect x="625.9" y="26.00" width="72.9" height="1.05" fill="#ac4a26" opacity="0.6"/><rect x="698.8" y="26.00" width="154.0" height="1.05" fill="#b5532a" opacity="0.6"/><rect x="852.8" y="26.00" width="152.9" height="1.05" fill="#ca6737" opacity="0.6"/><rect x="303.6" y="27.00" width="702.1" height="1.05" fill="#be5a2f"/><rect x="303.6" y="27.00" width="111.4" height="1.05" fill="#ca6839" opacity="0.6"/><rect x="415.0" y="27.00" width="134.9" height="1.05" fill="#c35f33" opacity="0.6"/><rect x="549.9" y="27.00" width="55.1" height="1.05" fill="#b14f29" opacity="0.6"/><rect x="605.0" y="27.00" width="81.8" height="1.05" fill="#c25e32" opacity="0.6"/><rect x="686.7" y="27.00" width="40.3" height="1.05" fill="#b04d28" opacity="0.6"/><rect x="727.0" y="27.00" width="147.7" height="1.05" fill="#c56235" opacity="0.6"/><rect x="874.7" y="27.00" width="117.8" height="1.05" fill="#c76437" opacity="0.6"/><rect x="303.6" y="28.00" width="702.1" height="1.05" fill="#ba562e"/><rect x="367.5" y="28.00" width="189.2" height="1.05" fill="#a84626" opacity="0.6"/><rect x="726.0" y="28.00" width="106.4" height="1.05" fill="#a34123" opacity="0.6"/><rect x="832.4" y="28.00" width="173.3" height="1.05" fill="#aa4827" opacity="0.6"/><rect x="303.6" y="29.00" width="702.1" height="1.05" fill="#b6512b"/><rect x="303.6" y="29.00" width="54.1" height="1.05" fill="#c46137" opacity="0.6"/><rect x="526.7" y="29.00" width="149.6" height="1.05" fill="#ac4826" opacity="0.6"/><rect x="676.3" y="29.00" width="112.6" height="1.05" fill="#9b391f" opacity="0.6"/><rect x="788.9" y="29.00" width="113.6" height="1.05" fill="#bd5931" opacity="0.6"/><rect x="902.5" y="29.00" width="53.9" height="1.05" fill="#a13e21" opacity="0.6"/><rect x="956.4" y="29.00" width="49.3" height="1.05" fill="#a94625" opacity="0.6"/><rect x="303.6" y="30.00" width="702.1" height="1.05" fill="#b24b28"/><rect x="303.6" y="30.00" width="172.6" height="1.05" fill="#a94324" opacity="0.6"/><rect x="627.5" y="30.00" width="79.3" height="1.05" fill="#ba542f" opacity="0.6"/><rect x="706.7" y="30.00" width="199.8" height="1.05" fill="#ba542f" opacity="0.6"/><rect x="906.5" y="30.00" width="99.2" height="1.05" fill="#97331c" opacity="0.6"/><rect x="303.6" y="31.00" width="702.1" height="1.05" fill="#ae4524"/><rect x="429.4" y="31.00" width="72.4" height="1.05" fill="#9d351c" opacity="0.6"/><rect x="501.8" y="31.00" width="62.3" height="1.05" fill="#bc5630" opacity="0.6"/><rect x="881.7" y="31.00" width="124.0" height="1.05" fill="#ba532e" opacity="0.6"/><rect x="303.6" y="32.00" width="702.1" height="1.05" fill="#aa3f20"/><rect x="448.7" y="32.00" width="139.6" height="1.05" fill="#8f2714" opacity="0.6"/><rect x="588.2" y="32.00" width="187.6" height="1.05" fill="#982f18" opacity="0.6"/><rect x="775.8" y="32.00" width="88.4" height="1.05" fill="#9d341a" opacity="0.6"/><rect x="864.2" y="32.00" width="141.5" height="1.05" fill="#9b3219" opacity="0.6"/><rect x="303.6" y="33.00" width="702.1" height="1.05" fill="#ab4021"/><rect x="303.6" y="33.00" width="81.1" height="1.05" fill="#b34928" opacity="0.6"/><rect x="384.7" y="33.00" width="58.4" height="1.05" fill="#942b16" opacity="0.6"/><rect x="443.2" y="33.00" width="184.0" height="1.05" fill="#b14726" opacity="0.6"/><rect x="811.3" y="33.00" width="106.5" height="1.05" fill="#932b16" opacity="0.6"/><rect x="917.8" y="33.00" width="45.4" height="1.05" fill="#912915" opacity="0.6"/><rect x="963.2" y="33.00" width="42.5" height="1.05" fill="#9b321a" opacity="0.6"/><rect x="303.6" y="34.00" width="702.1" height="1.05" fill="#b34c29"/><rect x="484.4" y="34.00" width="100.2" height="1.05" fill="#bd5731" opacity="0.6"/><rect x="584.6" y="34.00" width="94.1" height="1.05" fill="#99351d" opacity="0.6"/><rect x="755.9" y="34.00" width="51.4" height="1.05" fill="#be5832" opacity="0.6"/><rect x="807.2" y="34.00" width="176.7" height="1.05" fill="#9d381f" opacity="0.6"/><rect x="983.9" y="34.00" width="21.8" height="1.05" fill="#bc5630" opacity="0.6"/><rect x="303.6" y="35.00" width="702.1" height="1.05" fill="#bb5930"/><rect x="495.8" y="35.00" width="178.4" height="1.05" fill="#a04124" opacity="0.6"/><rect x="824.8" y="35.00" width="110.5" height="1.05" fill="#bf5d33" opacity="0.6"/><rect x="303.6" y="36.00" width="702.1" height="1.05" fill="#be5e34"/><rect x="474.0" y="36.00" width="195.3" height="1.05" fill="#a54728" opacity="0.6"/><rect x="669.2" y="36.00" width="56.2" height="1.05" fill="#c96b3e" opacity="0.6"/><rect x="303.6" y="37.00" width="702.1" height="1.05" fill="#ba5831"/><rect x="303.6" y="37.00" width="107.7" height="1.05" fill="#be5d34" opacity="0.6"/><rect x="411.3" y="37.00" width="163.0" height="1.05" fill="#b1502d" opacity="0.6"/><rect x="574.3" y="37.00" width="139.7" height="1.05" fill="#a14226" opacity="0.6"/><rect x="714.1" y="37.00" width="72.8" height="1.05" fill="#c6653b" opacity="0.6"/><rect x="786.9" y="37.00" width="49.1" height="1.05" fill="#a94929" opacity="0.6"/><rect x="835.9" y="37.00" width="129.1" height="1.05" fill="#c05f36" opacity="0.6"/><rect x="965.0" y="37.00" width="40.7" height="1.05" fill="#a44527" opacity="0.6"/><rect x="303.6" y="38.00" width="702.1" height="1.05" fill="#b6522f"/><rect x="551.5" y="38.00" width="110.8" height="1.05" fill="#9f3e25" opacity="0.6"/><rect x="855.6" y="38.00" width="82.3" height="1.05" fill="#a44227" opacity="0.6"/><rect x="937.9" y="38.00" width="67.8" height="1.05" fill="#bd5a35" opacity="0.6"/><rect x="303.6" y="39.00" width="702.1" height="1.05" fill="#ac472a"/><rect x="447.1" y="39.00" width="68.6" height="1.05" fill="#973420" opacity="0.6"/><rect x="515.6" y="39.00" width="101.5" height="1.05" fill="#b24e2f" opacity="0.6"/><rect x="782.6" y="39.00" width="115.8" height="1.05" fill="#a44026" opacity="0.6"/><rect x="981.4" y="39.00" width="24.3" height="1.05" fill="#a03c24" opacity="0.6"/><rect x="303.6" y="40.00" width="702.1" height="1.05" fill="#983224"/><rect x="383.7" y="40.00" width="114.3" height="1.05" fill="#811d19" opacity="0.6"/><rect x="498.0" y="40.00" width="100.9" height="1.05" fill="#a64230" opacity="0.6"/><rect x="598.9" y="40.00" width="54.9" height="1.05" fill="#9e3929" opacity="0.6"/><rect x="653.8" y="40.00" width="195.6" height="1.05" fill="#7e1a18" opacity="0.6"/><rect x="849.4" y="40.00" width="40.2" height="1.05" fill="#a64230" opacity="0.6"/><rect x="303.6" y="41.00" width="702.1" height="1.05" fill="#8c2520"/><rect x="503.2" y="41.00" width="86.0" height="1.05" fill="#831d1c" opacity="0.6"/><rect x="589.2" y="41.00" width="156.9" height="1.05" fill="#7e1819" opacity="0.6"/><rect x="746.0" y="41.00" width="94.4" height="1.05" fill="#932e26" opacity="0.6"/><rect x="840.4" y="41.00" width="58.8" height="1.05" fill="#761116" opacity="0.6"/><rect x="303.6" y="42.00" width="702.1" height="1.05" fill="#8b241f"/><rect x="303.6" y="42.00" width="65.3" height="1.05" fill="#98332a" opacity="0.6"/><rect x="368.9" y="42.00" width="169.7" height="1.05" fill="#8f2923" opacity="0.6"/><rect x="538.6" y="42.00" width="110.5" height="1.05" fill="#99342b" opacity="0.6"/><rect x="649.1" y="42.00" width="62.8" height="1.05" fill="#99342b" opacity="0.6"/><rect x="711.9" y="42.00" width="35.1" height="1.05" fill="#98332a" opacity="0.6"/><rect x="747.1" y="42.00" width="160.3" height="1.05" fill="#700c13" opacity="0.6"/><rect x="303.6" y="43.00" width="702.1" height="1.05" fill="#8a241f"/><rect x="303.6" y="43.00" width="182.8" height="1.05" fill="#741015" opacity="0.6"/><rect x="486.4" y="43.00" width="192.8" height="1.05" fill="#912c25" opacity="0.6"/><rect x="679.2" y="43.00" width="151.8" height="1.05" fill="#741015" opacity="0.6"/><rect x="861.6" y="43.00" width="144.1" height="1.05" fill="#98342b" opacity="0.6"/><rect x="303.6" y="44.00" width="702.1" height="1.05" fill="#89241f"/><rect x="303.6" y="44.00" width="34.1" height="1.05" fill="#771417" opacity="0.6"/><rect x="530.4" y="44.00" width="95.7" height="1.05" fill="#761316" opacity="0.6"/><rect x="956.6" y="44.00" width="49.1" height="1.05" fill="#902c25" opacity="0.6"/><rect x="303.6" y="45.00" width="702.1" height="1.05" fill="#89231e"/><rect x="303.6" y="45.00" width="84.3" height="1.05" fill="#953129" opacity="0.6"/><rect x="387.9" y="45.00" width="43.4" height="1.05" fill="#7c1818" opacity="0.6"/><rect x="431.4" y="45.00" width="72.0" height="1.05" fill="#6e0b12" opacity="0.6"/><rect x="503.4" y="45.00" width="123.9" height="1.05" fill="#811c1a" opacity="0.6"/><rect x="807.5" y="45.00" width="75.0" height="1.05" fill="#6f0c12" opacity="0.6"/><rect x="997.3" y="45.00" width="8.4" height="1.05" fill="#761215" opacity="0.6"/><rect x="303.6" y="46.00" width="702.1" height="1.05" fill="#8c261f"/><rect x="303.6" y="46.00" width="135.5" height="1.05" fill="#983429" opacity="0.6"/><rect x="439.1" y="46.00" width="174.0" height="1.05" fill="#912c23" opacity="0.6"/><rect x="613.0" y="46.00" width="172.9" height="1.05" fill="#7c1717" opacity="0.6"/><rect x="879.4" y="46.00" width="63.9" height="1.05" fill="#751215" opacity="0.6"/><rect x="999.3" y="46.00" width="6.4" height="1.05" fill="#781416" opacity="0.6"/><rect x="303.6" y="47.00" width="702.1" height="1.05" fill="#982f23"/><rect x="303.6" y="47.00" width="198.7" height="1.05" fill="#9e3628" opacity="0.6"/><rect x="502.3" y="47.00" width="167.4" height="1.05" fill="#a74030" opacity="0.6"/><rect x="669.8" y="47.00" width="47.4" height="1.05" fill="#a53e2e" opacity="0.6"/><rect x="890.0" y="47.00" width="36.9" height="1.05" fill="#7f1918" opacity="0.6"/><rect x="303.6" y="48.00" width="702.1" height="1.05" fill="#a33726"/><rect x="396.9" y="48.00" width="106.3" height="1.05" fill="#972c20" opacity="0.6"/><rect x="503.2" y="48.00" width="190.8" height="1.05" fill="#93291f" opacity="0.6"/><rect x="694.0" y="48.00" width="135.4" height="1.05" fill="#8f251d" opacity="0.6"/><rect x="829.4" y="48.00" width="54.0" height="1.05" fill="#8d231c" opacity="0.6"/><rect x="883.4" y="48.00" width="122.3" height="1.05" fill="#a93e2b" opacity="0.6"/><rect x="303.6" y="49.00" width="702.1" height="1.05" fill="#ab3e26"/><rect x="303.6" y="49.00" width="31.9" height="1.05" fill="#9d311f" opacity="0.6"/><rect x="335.5" y="49.00" width="61.5" height="1.05" fill="#94291b" opacity="0.6"/><rect x="397.0" y="49.00" width="165.2" height="1.05" fill="#af432a" opacity="0.6"/><rect x="562.2" y="49.00" width="47.2" height="1.05" fill="#b5492e" opacity="0.6"/><rect x="609.4" y="49.00" width="138.7" height="1.05" fill="#93281b" opacity="0.6"/><rect x="748.1" y="49.00" width="148.2" height="1.05" fill="#b2462c" opacity="0.6"/><rect x="978.6" y="49.00" width="27.1" height="1.05" fill="#b3472d" opacity="0.6"/><rect x="303.6" y="50.00" width="702.1" height="1.05" fill="#af4226"/><rect x="404.4" y="50.00" width="199.4" height="1.05" fill="#b5492b" opacity="0.6"/><rect x="603.8" y="50.00" width="153.8" height="1.05" fill="#942a1a" opacity="0.6"/><rect x="757.6" y="50.00" width="183.3" height="1.05" fill="#bc5131" opacity="0.6"/><rect x="303.6" y="51.00" width="702.1" height="1.05" fill="#ae4026"/><rect x="303.6" y="51.00" width="108.4" height="1.05" fill="#93281a" opacity="0.6"/><rect x="412.0" y="51.00" width="123.8" height="1.05" fill="#bc5032" opacity="0.6"/><rect x="535.7" y="51.00" width="45.1" height="1.05" fill="#b6492d" opacity="0.6"/><rect x="580.9" y="51.00" width="115.8" height="1.05" fill="#982c1c" opacity="0.6"/><rect x="815.2" y="51.00" width="48.5" height="1.05" fill="#bb4f31" opacity="0.6"/><rect x="863.7" y="51.00" width="142.0" height="1.05" fill="#952a1b" opacity="0.6"/><rect x="303.6" y="52.00" width="702.1" height="1.05" fill="#ac3f26"/><rect x="493.9" y="52.00" width="112.1" height="1.05" fill="#a33722" opacity="0.6"/><rect x="894.6" y="52.00" width="67.8" height="1.05" fill="#b94e31" opacity="0.6"/><rect x="962.4" y="52.00" width="43.3" height="1.05" fill="#952a1b" opacity="0.6"/><rect x="303.6" y="53.00" width="702.1" height="1.05" fill="#ab3e26"/><rect x="303.6" y="53.00" width="98.0" height="1.05" fill="#b3472d" opacity="0.6"/><rect x="401.6" y="53.00" width="50.9" height="1.05" fill="#9e3220" opacity="0.6"/><rect x="452.5" y="53.00" width="182.5" height="1.05" fill="#9b2f1e" opacity="0.6"/><rect x="635.0" y="53.00" width="158.8" height="1.05" fill="#a03421" opacity="0.6"/><rect x="793.8" y="53.00" width="50.0" height="1.05" fill="#b5492e" opacity="0.6"/><rect x="843.8" y="53.00" width="136.6" height="1.05" fill="#982d1d" opacity="0.6"/><rect x="980.4" y="53.00" width="25.3" height="1.05" fill="#b64b2f" opacity="0.6"/><rect x="303.6" y="54.00" width="702.1" height="1.05" fill="#a23724"/><rect x="303.6" y="54.00" width="106.0" height="1.05" fill="#a63c27" opacity="0.6"/><rect x="409.6" y="54.00" width="135.2" height="1.05" fill="#a83e29" opacity="0.6"/><rect x="704.6" y="54.00" width="107.9" height="1.05" fill="#90271c" opacity="0.6"/><rect x="812.5" y="54.00" width="48.2" height="1.05" fill="#8f261b" opacity="0.6"/><rect x="860.7" y="54.00" width="45.6" height="1.05" fill="#ab422c" opacity="0.6"/><rect x="906.3" y="54.00" width="36.9" height="1.05" fill="#a73c28" opacity="0.6"/><rect x="303.6" y="55.00" width="702.1" height="1.05" fill="#8b281f"/><rect x="303.6" y="55.00" width="117.0" height="1.05" fill="#791817" opacity="0.6"/><rect x="767.3" y="55.00" width="168.5" height="1.05" fill="#83211b" opacity="0.6"/><rect x="303.6" y="56.00" width="702.1" height="1.05" fill="#7c1d1c"/><rect x="303.6" y="56.00" width="185.7" height="1.05" fill="#701216" opacity="0.6"/><rect x="489.3" y="56.00" width="188.2" height="1.05" fill="#670b13" opacity="0.6"/><rect x="677.5" y="56.00" width="158.6" height="1.05" fill="#721417" opacity="0.6"/><rect x="912.8" y="56.00" width="54.4" height="1.05" fill="#8a2d28" opacity="0.6"/><rect x="967.2" y="56.00" width="38.5" height="1.05" fill="#6b0d14" opacity="0.6"/><rect x="303.6" y="57.00" width="702.1" height="1.05" fill="#7d1e1c"/><rect x="303.6" y="57.00" width="84.2" height="1.05" fill="#650911" opacity="0.6"/><rect x="649.5" y="57.00" width="49.6" height="1.05" fill="#882a25" opacity="0.6"/><rect x="790.2" y="57.00" width="124.4" height="1.05" fill="#8b2e28" opacity="0.6"/><rect x="962.4" y="57.00" width="43.3" height="1.05" fill="#8a2d27" opacity="0.6"/><rect x="303.6" y="58.00" width="702.1" height="1.05" fill="#7d1e1c"/><rect x="378.6" y="58.00" width="128.2" height="1.05" fill="#892c26" opacity="0.6"/><rect x="506.8" y="58.00" width="105.2" height="1.05" fill="#701316" opacity="0.6"/><rect x="650.2" y="58.00" width="73.1" height="1.05" fill="#8c2f29" opacity="0.6"/><rect x="723.3" y="58.00" width="129.6" height="1.05" fill="#842622" opacity="0.6"/><rect x="852.9" y="58.00" width="30.3" height="1.05" fill="#640811" opacity="0.6"/><rect x="883.2" y="58.00" width="122.5" height="1.05" fill="#862924" opacity="0.6"/><rect x="303.6" y="59.00" width="702.1" height="1.05" fill="#7e1f1c"/><rect x="303.6" y="59.00" width="182.2" height="1.05" fill="#670a11" opacity="0.6"/><rect x="485.8" y="59.00" width="141.0" height="1.05" fill="#630710" opacity="0.6"/><rect x="626.9" y="59.00" width="90.3" height="1.05" fill="#6a0d13" opacity="0.6"/><rect x="717.2" y="59.00" width="68.1" height="1.05" fill="#882b25" opacity="0.6"/><rect x="785.3" y="59.00" width="64.7" height="1.05" fill="#872924" opacity="0.6"/><rect x="903.0" y="59.00" width="71.4" height="1.05" fill="#640810" opacity="0.6"/><rect x="303.6" y="60.00" width="702.1" height="1.05" fill="#85251e"/><rect x="303.6" y="60.00" width="163.0" height="1.05" fill="#8c2d24" opacity="0.6"/><rect x="466.6" y="60.00" width="32.0" height="1.05" fill="#8f3026" opacity="0.6"/><rect x="498.5" y="60.00" width="89.6" height="1.05" fill="#8e2f25" opacity="0.6"/><rect x="849.6" y="60.00" width="37.5" height="1.05" fill="#8d2e25" opacity="0.6"/><rect x="887.1" y="60.00" width="70.4" height="1.05" fill="#791a18" opacity="0.6"/><rect x="957.5" y="60.00" width="32.1" height="1.05" fill="#93352a" opacity="0.6"/><rect x="989.6" y="60.00" width="16.1" height="1.05" fill="#761717" opacity="0.6"/><rect x="303.6" y="61.00" width="702.1" height="1.05" fill="#9a3823"/><rect x="303.6" y="61.00" width="116.2" height="1.05" fill="#a7472e" opacity="0.6"/><rect x="419.8" y="61.00" width="59.7" height="1.05" fill="#842519" opacity="0.6"/><rect x="711.9" y="61.00" width="156.7" height="1.05" fill="#a6462d" opacity="0.6"/><rect x="868.6" y="61.00" width="106.9" height="1.05" fill="#812117" opacity="0.6"/><rect x="975.5" y="61.00" width="30.2" height="1.05" fill="#852519" opacity="0.6"/><rect x="303.6" y="62.00" width="702.1" height="1.05" fill="#a84426"/><rect x="303.6" y="62.00" width="157.4" height="1.05" fill="#b55331" opacity="0.6"/><rect x="461.0" y="62.00" width="151.0" height="1.05" fill="#97351e" opacity="0.6"/><rect x="716.2" y="62.00" width="119.0" height="1.05" fill="#99371f" opacity="0.6"/><rect x="835.1" y="62.00" width="170.6" height="1.05" fill="#9e3b21" opacity="0.6"/><rect x="303.6" y="63.00" width="702.1" height="1.05" fill="#a74326"/><rect x="303.6" y="63.00" width="32.6" height="1.05" fill="#902f1c" opacity="0.6"/><rect x="492.6" y="63.00" width="156.8" height="1.05" fill="#9d3a21" opacity="0.6"/><rect x="649.5" y="63.00" width="85.9" height="1.05" fill="#9d3a21" opacity="0.6"/><rect x="735.3" y="63.00" width="137.2" height="1.05" fill="#b2502f" opacity="0.6"/><rect x="872.6" y="63.00" width="133.1" height="1.05" fill="#b45231" opacity="0.6"/><rect x="303.6" y="64.00" width="702.1" height="1.05" fill="#a64326"/><rect x="556.5" y="64.00" width="127.0" height="1.05" fill="#8f2e1b" opacity="0.6"/><rect x="683.5" y="64.00" width="135.8" height="1.05" fill="#9d3b22" opacity="0.6"/><rect x="819.3" y="64.00" width="54.6" height="1.05" fill="#8d2c1a" opacity="0.6"/><rect x="873.9" y="64.00" width="131.8" height="1.05" fill="#8d2d1b" opacity="0.6"/><rect x="303.6" y="65.00" width="702.1" height="1.05" fill="#a64226"/><rect x="303.6" y="65.00" width="34.9" height="1.05" fill="#983620" opacity="0.6"/><rect x="338.5" y="65.00" width="137.8" height="1.05" fill="#b25030" opacity="0.6"/><rect x="476.2" y="65.00" width="41.2" height="1.05" fill="#ae4b2d" opacity="0.6"/><rect x="686.4" y="65.00" width="181.5" height="1.05" fill="#9c3921" opacity="0.6"/><rect x="303.6" y="66.00" width="702.1" height="1.05" fill="#a54226"/><rect x="303.6" y="66.00" width="48.2" height="1.05" fill="#8c2b1a" opacity="0.6"/><rect x="387.7" y="66.00" width="168.0" height="1.05" fill="#b25131" opacity="0.6"/><rect x="555.7" y="66.00" width="137.4" height="1.05" fill="#8b2b1a" opacity="0.6"/><rect x="739.7" y="66.00" width="64.8" height="1.05" fill="#92311d" opacity="0.6"/><rect x="804.6" y="66.00" width="33.6" height="1.05" fill="#8f2e1c" opacity="0.6"/><rect x="838.1" y="66.00" width="151.7" height="1.05" fill="#ac4a2c" opacity="0.6"/><rect x="989.8" y="66.00" width="15.9" height="1.05" fill="#b25131" opacity="0.6"/><rect x="303.6" y="67.00" width="702.1" height="1.05" fill="#a44126"/><rect x="303.6" y="67.00" width="135.1" height="1.05" fill="#91301d" opacity="0.6"/><rect x="631.9" y="67.00" width="121.4" height="1.05" fill="#9a3821" opacity="0.6"/><rect x="798.7" y="67.00" width="59.0" height="1.05" fill="#8d2c1b" opacity="0.6"/><rect x="303.6" y="68.00" width="702.1" height="1.05" fill="#9d3d24"/><rect x="303.6" y="68.00" width="30.7" height="1.05" fill="#a6482c" opacity="0.6"/><rect x="334.3" y="68.00" width="165.5" height="1.05" fill="#8b2d1c" opacity="0.6"/><rect x="663.1" y="68.00" width="78.2" height="1.05" fill="#8f311e" opacity="0.6"/><rect x="741.3" y="68.00" width="114.7" height="1.05" fill="#8e301d" opacity="0.6"/><rect x="303.6" y="69.00" width="702.1" height="1.05" fill="#872f1f"/><rect x="303.6" y="69.00" width="136.7" height="1.05" fill="#8f3826" opacity="0.6"/><rect x="582.1" y="69.00" width="34.3" height="1.05" fill="#711b15" opacity="0.6"/><rect x="616.4" y="69.00" width="183.2" height="1.05" fill="#8f3826" opacity="0.6"/><rect x="799.6" y="69.00" width="180.3" height="1.05" fill="#751f17" opacity="0.6"/><rect x="303.6" y="70.00" width="702.1" height="0.25" fill="#78251c"/><rect x="303.6" y="70.00" width="158.0" height="0.25" fill="#802e22" opacity="0.6"/><rect x="461.6" y="70.00" width="85.5" height="0.25" fill="#6d1b17" opacity="0.6"/><rect x="689.7" y="70.00" width="58.8" height="0.25" fill="#843327" opacity="0.6"/><rect x="748.5" y="70.00" width="128.5" height="0.25" fill="#661514" opacity="0.6"/><rect x="877.0" y="70.00" width="128.7" height="0.25" fill="#601011" opacity="0.6"/></g></defs>
<use href="#bub" transform="translate(0,293.00)"/>
<rect x="303.6" y="363.20" width="702.1" height="7.02" fill="#f5e4c4"/>
<rect x="303.6" y="363.20" width="702.1" height="1" fill="#f3e2c2" opacity="0.6"/>
<rect x="303.6" y="364.20" width="702.1" height="1" fill="#fbeaca" opacity="0.6"/>
<rect x="303.6" y="365.20" width="702.1" height="1" fill="#fae9c9" opacity="0.6"/>
<rect x="303.6" y="366.20" width="702.1" height="1" fill="#f8e7c7" opacity="0.6"/>
<rect x="303.6" y="367.20" width="702.1" height="1" fill="#f1e0c0" opacity="0.6"/>
<rect x="303.6" y="368.20" width="702.1" height="1" fill="#fae9c9" opacity="0.6"/>
<rect x="303.6" y="369.20" width="702.1" height="1" fill="#f1e0c0" opacity="0.6"/>
<rect x="303.6" y="370.22" width="702.1" height="17.55" fill="#bea284"/>
<rect x="303.6" y="370.22" width="702.1" height="1" fill="#bda183" opacity="0.6"/>
<rect x="303.6" y="371.22" width="702.1" height="1" fill="#c0a486" opacity="0.6"/>
<rect x="303.6" y="372.22" width="702.1" height="1" fill="#c6aa8c" opacity="0.6"/>
<rect x="303.6" y="373.22" width="702.1" height="1" fill="#c1a587" opacity="0.6"/>
<rect x="303.6" y="374.22" width="702.1" height="1" fill="#bb9f81" opacity="0.6"/>
<rect x="303.6" y="375.22" width="702.1" height="1" fill="#bda183" opacity="0.6"/>
<rect x="303.6" y="376.22" width="702.1" height="1" fill="#c0a486" opacity="0.6"/>
<rect x="303.6" y="377.22" width="702.1" height="1" fill="#bca082" opacity="0.6"/>
<rect x="303.6" y="378.22" width="702.1" height="1" fill="#bea284" opacity="0.6"/>
<rect x="303.6" y="379.22" width="702.1" height="1" fill="#b99d7f" opacity="0.6"/>
<rect x="303.6" y="380.22" width="702.1" height="1" fill="#bb9f81" opacity="0.6"/>
<rect x="303.6" y="381.22" width="702.1" height="1" fill="#b99d7f" opacity="0.6"/>
<rect x="303.6" y="382.22" width="702.1" height="1" fill="#bca082" opacity="0.6"/>
<rect x="303.6" y="383.22" width="702.1" height="1" fill="#c2a688" opacity="0.6"/>
<rect x="303.6" y="384.22" width="702.1" height="1" fill="#ba9e80" opacity="0.6"/>
<rect x="303.6" y="385.22" width="702.1" height="1" fill="#ba9e80" opacity="0.6"/>
<rect x="303.6" y="386.22" width="702.1" height="1" fill="#bfa385" opacity="0.6"/>
<rect x="303.6" y="387.77" width="702.1" height="7.02" fill="#b0120a"/>
<rect x="303.6" y="387.77" width="702.1" height="1" fill="#af1109" opacity="0.6"/>
<rect x="303.6" y="388.77" width="702.1" height="1" fill="#b3150d" opacity="0.6"/>
<rect x="303.6" y="389.77" width="702.1" height="1" fill="#ae1008" opacity="0.6"/>
<rect x="303.6" y="390.77" width="702.1" height="1" fill="#ac0e06" opacity="0.6"/>
<rect x="303.6" y="391.77" width="702.1" height="1" fill="#a90b03" opacity="0.6"/>
<rect x="303.6" y="392.77" width="702.1" height="1" fill="#ba1c14" opacity="0.6"/>
<rect x="303.6" y="393.77" width="702.1" height="1" fill="#a90b03" opacity="0.6"/>
<rect x="303.6" y="394.79" width="702.1" height="17.55" fill="#0a080a"/>
<rect x="303.6" y="394.79" width="702.1" height="1" fill="#0a080a" opacity="0.6"/>
<rect x="303.6" y="395.79" width="702.1" height="1" fill="#090709" opacity="0.6"/>
<rect x="303.6" y="396.79" width="702.1" height="1" fill="#0c0a0c" opacity="0.6"/>
<rect x="303.6" y="397.79" width="702.1" height="1" fill="#0d0b0d" opacity="0.6"/>
<rect x="303.6" y="398.79" width="702.1" height="1" fill="#060406" opacity="0.6"/>
<rect x="303.6" y="399.79" width="702.1" height="1" fill="#060406" opacity="0.6"/>
<rect x="303.6" y="400.79" width="702.1" height="1" fill="#0c0a0c" opacity="0.6"/>
<rect x="303.6" y="401.79" width="702.1" height="1" fill="#0c0a0c" opacity="0.6"/>
<rect x="303.6" y="402.79" width="702.1" height="1" fill="#090709" opacity="0.6"/>
<rect x="303.6" y="403.79" width="702.1" height="1" fill="#0e0c0e" opacity="0.6"/>
<rect x="303.6" y="404.79" width="702.1" height="1" fill="#0a080a" opacity="0.6"/>
<rect x="303.6" y="405.79" width="702.1" height="1" fill="#0d0b0d" opacity="0.6"/>
<rect x="303.6" y="406.79" width="702.1" height="1" fill="#060406" opacity="0.6"/>
<rect x="303.6" y="407.79" width="702.1" height="1" fill="#080608" opacity="0.6"/>
<rect x="303.6" y="408.79" width="702.1" height="1" fill="#0a080a" opacity="0.6"/>
<rect x="303.6" y="409.79" width="702.1" height="1" fill="#0c0a0c" opacity="0.6"/>
<rect x="303.6" y="410.79" width="702.1" height="1" fill="#060406" opacity="0.6"/>
<rect x="303.6" y="412.34" width="702.1" height="7.02" fill="#b0120a"/>
<rect x="303.6" y="412.34" width="702.1" height="1" fill="#ad0f07" opacity="0.6"/>
<rect x="303.6" y="413.34" width="702.1" height="1" fill="#b3150d" opacity="0.6"/>
<rect x="303.6" y="414.34" width="702.1" height="1" fill="#b81a12" opacity="0.6"/>
<rect x="303.6" y="415.34" width="702.1" height="1" fill="#b81a12" opacity="0.6"/>
<rect x="303.6" y="416.34" width="702.1" height="1" fill="#ba1c14" opacity="0.6"/>
<rect x="303.6" y="417.34" width="702.1" height="1" fill="#b3150d" opacity="0.6"/>
<rect x="303.6" y="418.34" width="702.1" height="1" fill="#ad0f07" opacity="0.6"/>
<rect x="303.6" y="419.36" width="702.1" height="17.55" fill="#bea284"/>
<rect x="303.6" y="419.36" width="702.1" height="1" fill="#bda183" opacity="0.6"/>
<rect x="303.6" y="420.36" width="702.1" height="1" fill="#bb9f81" opacity="0.6"/>
<rect x="303.6" y="421.36" width="702.1" height="1" fill="#b99d7f" opacity="0.6"/>
<rect x="303.6" y="422.36" width="702.1" height="1" fill="#c4a88a" opacity="0.6"/>
<rect x="303.6" y="423.36" width="702.1" height="1" fill="#c3a789" opacity="0.6"/>
<rect x="303.6" y="424.36" width="702.1" height="1" fill="#c0a486" opacity="0.6"/>
<rect x="303.6" y="425.36" width="702.1" height="1" fill="#bea284" opacity="0.6"/>
<rect x="303.6" y="426.36" width="702.1" height="1" fill="#b99d7f" opacity="0.6"/>
<rect x="303.6" y="427.36" width="702.1" height="1" fill="#c3a789" opacity="0.6"/>
<rect x="303.6" y="428.36" width="702.1" height="1" fill="#bda183" opacity="0.6"/>
<rect x="303.6" y="429.36" width="702.1" height="1" fill="#c2a688" opacity="0.6"/>
<rect x="303.6" y="430.36" width="702.1" height="1" fill="#bb9f81" opacity="0.6"/>
<rect x="303.6" y="431.36" width="702.1" height="1" fill="#bea284" opacity="0.6"/>
<rect x="303.6" y="432.36" width="702.1" height="1" fill="#c3a789" opacity="0.6"/>
<rect x="303.6" y="433.36" width="702.1" height="1" fill="#c5a98b" opacity="0.6"/>
<rect x="303.6" y="434.36" width="702.1" height="1" fill="#c4a88a" opacity="0.6"/>
<rect x="303.6" y="435.36" width="702.1" height="1" fill="#b69a7c" opacity="0.6"/>
<rect x="303.6" y="436.91" width="702.1" height="7.02" fill="#f5e4c4"/>
<rect x="303.6" y="436.91" width="702.1" height="1" fill="#f8e7c7" opacity="0.6"/>
<rect x="303.6" y="437.91" width="702.1" height="1" fill="#f5e4c4" opacity="0.6"/>
<rect x="303.6" y="438.91" width="702.1" height="1" fill="#f7e6c6" opacity="0.6"/>
<rect x="303.6" y="439.91" width="702.1" height="1" fill="#f9e8c8" opacity="0.6"/>
<rect x="303.6" y="440.91" width="702.1" height="1" fill="#f9e8c8" opacity="0.6"/>
<rect x="303.6" y="441.91" width="702.1" height="1" fill="#f1e0c0" opacity="0.6"/>
<rect x="303.6" y="442.91" width="702.1" height="1" fill="#f9e8c8" opacity="0.6"/>
<use href="#bub" transform="translate(0,443.93)"/>
</svg>
</body></html>
